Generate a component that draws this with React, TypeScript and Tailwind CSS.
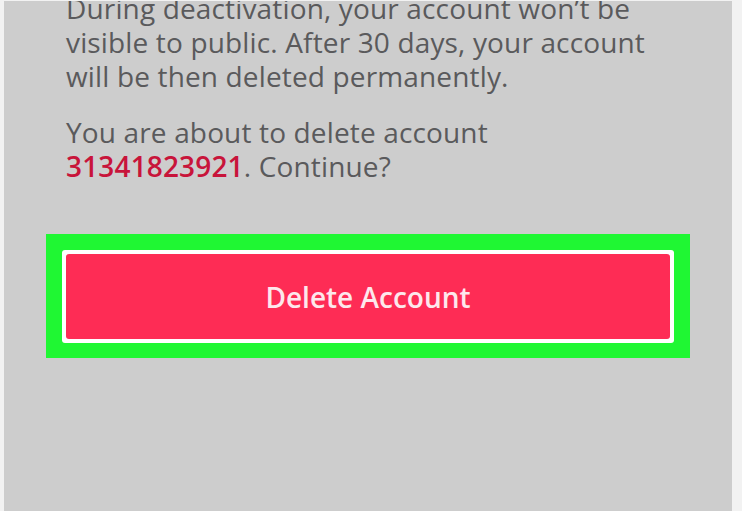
export default function App() {
  return (
    <div className="h-[511px] w-[742px] overflow-hidden bg-[#f2f2f2] pl-[4px] pr-[10px] pt-[1px]">
      <div className="flex h-full flex-col overflow-hidden bg-[#cdcdcd] font-['Open_Sans',sans-serif]">
        <div className="mt-[-10px] pl-[62px] text-[28px] leading-[34px] tracking-[0.15px] text-[#5a5a5c]">
          <p>
            During deactivation, your account won’t be
            <br />
            visible to public. After 30 days, your account
            <br />
            will be then deleted permanently.
          </p>
          <p className="mt-[22px]">
            You are about to delete account
            <br />
            <span className="font-semibold text-[#c8143a]">31341823921</span>. Continue?
          </p>
        </div>

        {/* highlighted button */}
        <div className="ml-[42px] mt-[51px] w-[644px] bg-[#1ff733] p-[16px] pb-[15px]">
          <div className="rounded-[3px] bg-white p-[4px]">
            <button className="flex h-[85px] w-full items-center justify-center rounded-[3px] bg-[#fe2c55] text-[28px] font-semibold text-[#fde8ec]">
              Delete Account
            </button>
          </div>
        </div>
      </div>
    </div>
  )
}
